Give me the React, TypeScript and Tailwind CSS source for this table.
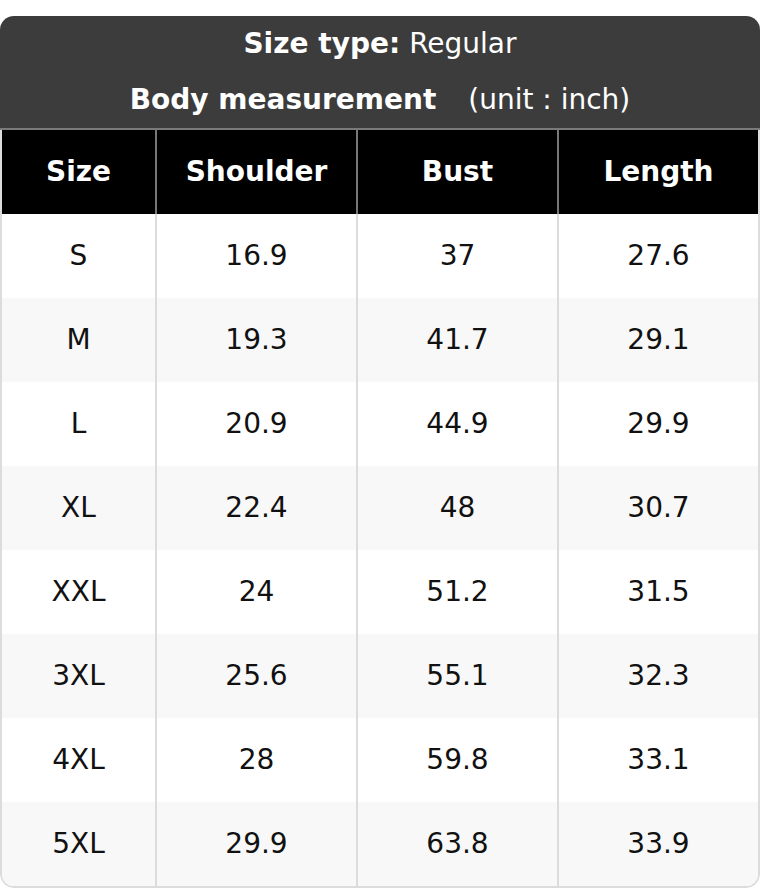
import React from "react";

const rows: [string, string, string, string][] = [
  ["S", "16.9", "37", "27.6"],
  ["M", "19.3", "41.7", "29.1"],
  ["L", "20.9", "44.9", "29.9"],
  ["XL", "22.4", "48", "30.7"],
  ["XXL", "24", "51.2", "31.5"],
  ["3XL", "25.6", "55.1", "32.3"],
  ["4XL", "28", "59.8", "33.1"],
  ["5XL", "29.9", "63.8", "33.9"],
];

export default function App() {
  return (
    <div className="w-[760px] h-[888px] bg-white pt-[16px] text-[28px] font-['DejaVu_Sans',sans-serif]">
      <div className="rounded-[14px] overflow-hidden">
        <div className="bg-[#3c3c3c] text-white border-b-2 border-[#7a7a7a]">
          <div className="h-[56px] flex items-center justify-center">
            <span className="font-bold">Size type:</span>
            <span className="ml-[9px]">Regular</span>
          </div>
          <div className="h-[56px] flex items-center justify-center">
            <span className="font-bold">Body measurement</span>
            <span className="ml-[32px]">(unit : inch)</span>
          </div>
        </div>
        <div className="border-x-2 border-b-2 border-[#dcdcdc] rounded-b-[14px] overflow-hidden">
          <div className="grid grid-cols-[153px_201px_201px_201px] h-[84px] bg-black text-white font-bold">
            <div className="flex items-center justify-center">Size</div>
            <div className="flex items-center justify-center border-l-2 border-[#777]">Shoulder</div>
            <div className="flex items-center justify-center border-l-2 border-[#777]">Bust</div>
            <div className="flex items-center justify-center border-l-2 border-[#777]">Length</div>
          </div>
          {rows.map((r, i) => (
            <div
              key={r[0]}
              className={`grid grid-cols-[153px_201px_201px_201px] h-[84px] text-[#111] ${i % 2 === 1 ? "bg-[#f8f8f8]" : "bg-white"}`}
            >
              <div className="flex items-center justify-center">{r[0]}</div>
              <div className="flex items-center justify-center border-l-2 border-[#dcdcdc]">{r[1]}</div>
              <div className="flex items-center justify-center border-l-2 border-[#dcdcdc]">{r[2]}</div>
              <div className="flex items-center justify-center border-l-2 border-[#dcdcdc]">{r[3]}</div>
            </div>
          ))}
        </div>
      </div>
    </div>
  );
}
